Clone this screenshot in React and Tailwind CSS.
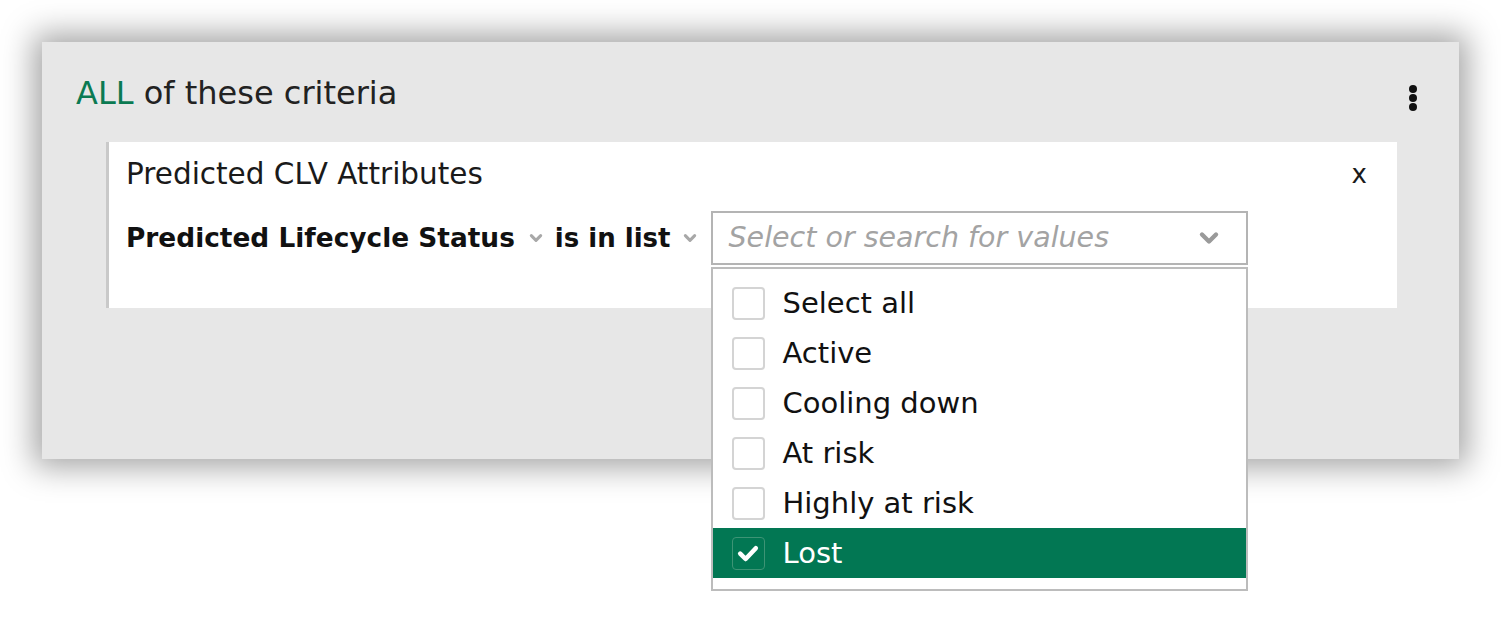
const options = ["Select all", "Active", "Cooling down", "At risk", "Highly at risk", "Lost"];
const selected = ["Lost"];

const font = { fontFamily: '"DejaVu Sans", sans-serif' };

const SmallChevron = ({ className }) => (
  <svg viewBox="0 0 12 8" className={className} fill="none" stroke="currentColor" strokeWidth="2.6" strokeLinecap="round" strokeLinejoin="round">
    <path d="M2 2l4 4 4-4" />
  </svg>
);

const Check = () => (
  <svg viewBox="0 0 20 20" className="w-[24px] h-[24px]" fill="none" stroke="white" strokeWidth="3.8" strokeLinecap="round" strokeLinejoin="round">
    <path d="M3.5 10.5l4.5 4.5 8.5-9" />
  </svg>
);

const Option = ({ label }) => {
  const on = selected.includes(label);
  return (
    <div className={`flex items-center h-[50px] pl-[19px] ${on ? "bg-[#027753] text-white" : "text-[#111]"}`}>
      <span
        className={`flex items-center justify-center w-[33px] h-[33px] rounded-[4px] ${
          on ? "border border-[#3d9475]" : "border-2 border-[#d4d4d4]"
        }`}
      >
        {on && <Check />}
      </span>
      <span className="ml-[18px] text-[29px] leading-none">{label}</span>
    </div>
  );
};

const App = () => {
  return (
    <div className="w-[1501px] h-[626px] bg-white pt-[42px] pl-[42px] overflow-hidden" style={font}>
      {/* criteria group */}
      <div className="relative w-[1417px] h-[417px] bg-[#e7e7e7] shadow-[0_0_30px_8px_rgba(0,0,0,0.36)]">
        <div className="flex items-start justify-between pl-[34px] pr-[42px] pt-[30px]">
          <h2 className="text-[32px] leading-[42px] text-[#222]">
            <span className="text-[#0b7a52]">ALL</span> of these criteria
          </h2>
          <div className="flex flex-col gap-[1px] pt-[13px]">
            <span className="w-[8px] h-[8px] rounded-full bg-[#111]" />
            <span className="w-[8px] h-[8px] rounded-full bg-[#111]" />
            <span className="w-[8px] h-[8px] rounded-full bg-[#111]" />
          </div>
        </div>

        {/* condition card */}
        <div className="ml-[64px] mt-[28px] w-[1291px] h-[166px] bg-white border-l-[3px] border-[#c9c9c9] pl-[17px] pr-[30px]">
          <div className="flex items-center justify-between pt-[16px] h-[48px]">
            <span className="text-[29.5px] text-[#1a1a1a]">Predicted CLV Attributes</span>
            <span className="text-[26px] text-[#1a1a1a]">x</span>
          </div>
          <div className="flex items-start mt-[21px]">
            <div className="flex items-center h-[54px]">
              <span className="text-[26.4px] font-bold text-[#111]">Predicted Lifecycle Status</span>
              <SmallChevron className="w-[14px] h-[10px] ml-[14px] text-[#a8a8a8]" />
              <span className="ml-[12px] text-[26px] font-bold text-[#111]">is in list</span>
              <SmallChevron className="w-[14px] h-[10px] ml-[12px] text-[#a8a8a8]" />
            </div>

            <div className="relative ml-[14px]">
              <div className="flex items-center justify-between w-[537px] h-[54px] border-2 border-[#b4b4b4] pl-[16px] pr-[26px]">
                <span className="text-[28.5px] italic text-[#a3a3a3]">Select or search for values</span>
                <svg viewBox="0 0 24 16" className="w-[22px] h-[14px] text-[#9a9a9a]" fill="none" stroke="currentColor" strokeWidth="5" strokeLinecap="round" strokeLinejoin="round">
                  <path d="M4 4l8 8 8-8" />
                </svg>
              </div>
              <div className="absolute left-0 top-[56px] w-[537px] border-2 border-[#bcbcbc] bg-white pt-[9px] pb-[11px] z-10">
                {options.map((o) => (
                  <Option key={o} label={o} />
                ))}
              </div>
            </div>
          </div>
        </div>
      </div>
    </div>
  );
};

export default App;
